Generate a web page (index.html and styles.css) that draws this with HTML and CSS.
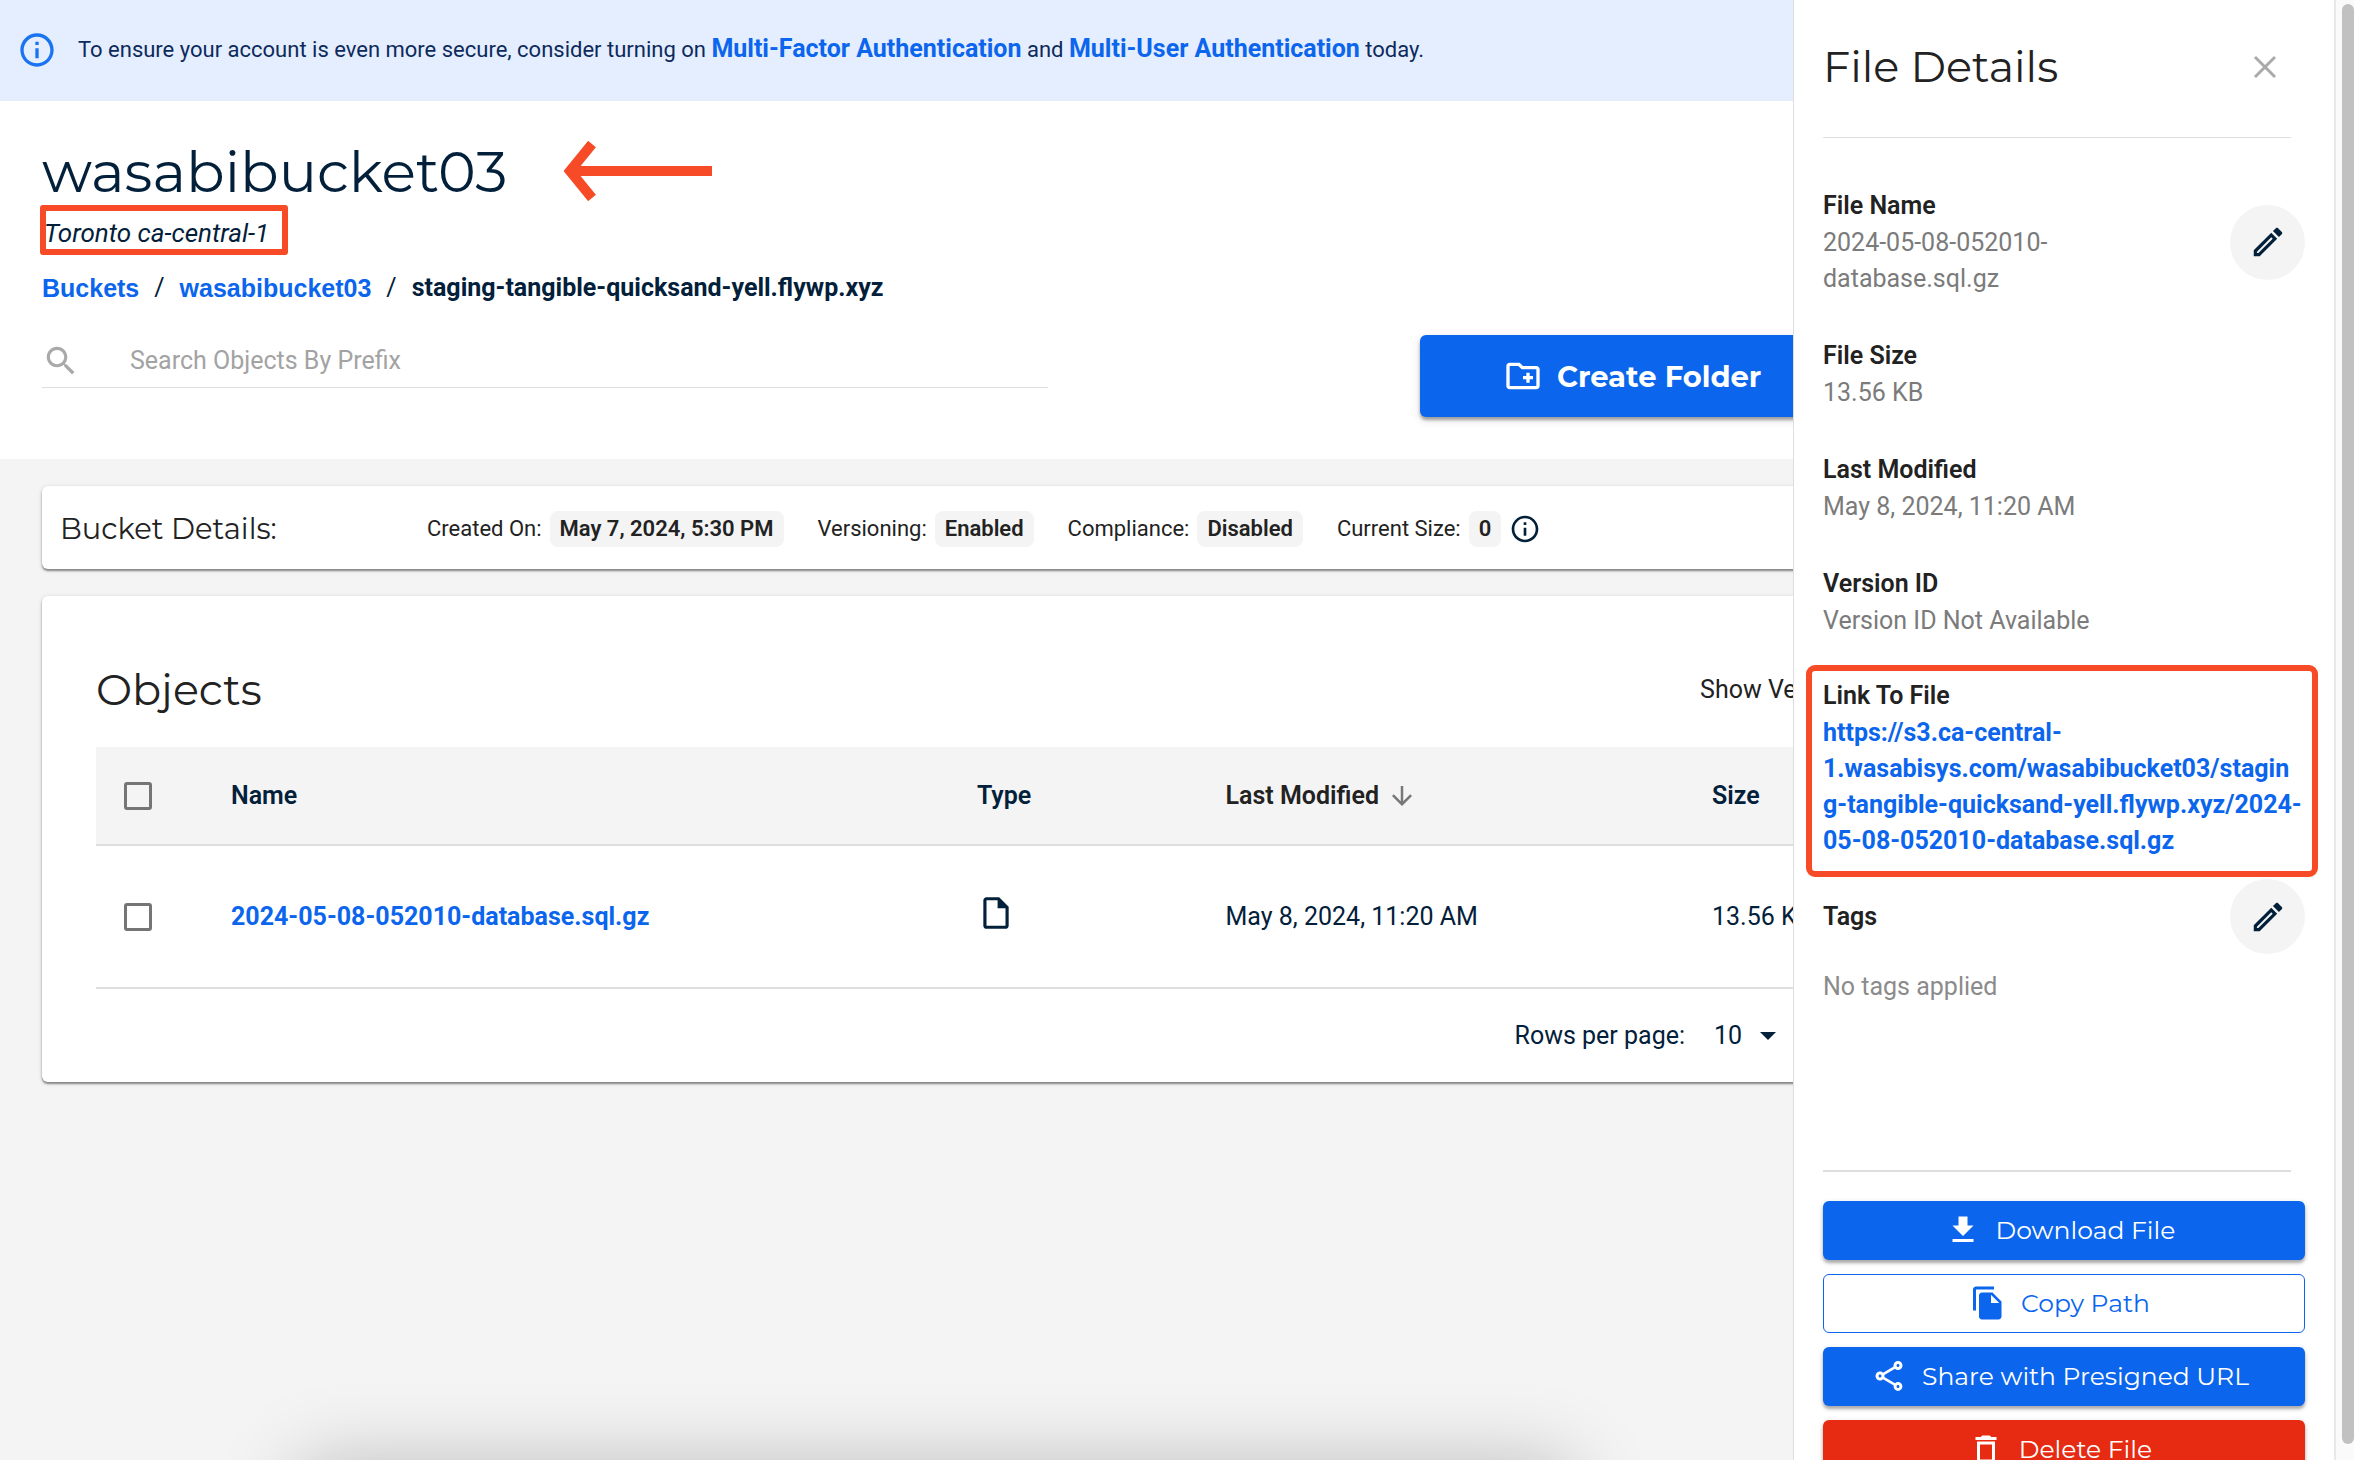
FILE: index.html
```html
<!DOCTYPE html>
<html lang="en">
<head>
<meta charset="utf-8">
<title>wasabibucket03</title>
<link rel="stylesheet" href="styles.css">
</head>
<body>
<div class="notice">
  <svg class="notice-icon" viewBox="0 0 24 24"><path d="M11 7h2v2h-2zm0 4h2v6h-2zm1-9C6.480 2 2 6.480 2 12s4.480 10 10 10 10-4.480 10-10S17.520 2 12 2zm0 18c-4.410 0-8-3.590-8-8s3.590-8 8-8 8 3.590 8 8-3.590 8-8 8z"/></svg>
  <p class="notice-text">To ensure your account is even more secure, consider turning on <a href="#">Multi-Factor Authentication</a> and <a href="#">Multi-User Authentication</a> today.</p>
</div>

<header class="head">
  <div class="title-row">
    <h1 class="title">wasabibucket03</h1>
    <svg class="title-arrow" viewBox="0 0 150 60"><path d="M7 30H149" stroke-width="10"/><path d="M29 3L7 30L29 57" stroke-width="10"/></svg>
  </div>
  <p class="region">Toronto ca-central-1</p>
  <nav class="crumbs">
    <a href="#">Buckets</a><span>/</span><a href="#">wasabibucket03</a><span>/</span><strong>staging-tangible-quicksand-yell.flywp.xyz</strong>
  </nav>
  <div class="toolbar">
    <label class="search">
      <svg class="search-icon" viewBox="0 0 24 24"><path d="M15.500 14h-.79l-.28-.27C15.410 12.590 16 11.110 16 9.500 16 5.910 13.090 3 9.500 3S3 5.910 3 9.500 5.910 16 9.500 16c1.610 0 3.090-.59 4.230-1.570l.27.28v.79l5 4.990L20.490 19l-4.990-5zm-6 0C7.010 14 5 11.990 5 9.500S7.010 5 9.500 5 14 7.010 14 9.500 11.990 14 9.500 14z"/></svg>
      <input type="text" placeholder="Search Objects By Prefix" aria-label="Search Objects By Prefix">
    </label>
    <button class="create" type="button">
      <svg class="create-icon" viewBox="0 0 24 24"><path d="M20 6h-8l-2-2H4c-1.110 0-1.990.89-1.990 2L2 18c0 1.110.89 2 2 2h16c1.110 0 2-.89 2-2V8c0-1.110-.89-2-2-2zm0 12H4V6h5.170l2 2H20v10zm-8-4h2v2h2v-2h2v-2h-2v-2h-2v2h-2z"/></svg>
      Create Folder
    </button>
  </div>
</header>

<main class="content">
  <section class="card details">
    <h2 class="details-title">Bucket Details:</h2>
    <dl class="facts">
      <div><dt>Created On:</dt><dd>May 7, 2024, 5:30 PM</dd></div>
      <div><dt>Versioning:</dt><dd>Enabled</dd></div>
      <div><dt>Compliance:</dt><dd>Disabled</dd></div>
      <div><dt>Current Size:</dt><dd>0</dd>
        <svg class="info-icon" viewBox="0 0 24 24"><path d="M11 7h2v2h-2zm0 4h2v6h-2zm1-9C6.480 2 2 6.480 2 12s4.480 10 10 10 10-4.480 10-10S17.520 2 12 2zm0 18c-4.410 0-8-3.590-8-8s3.590-8 8-8 8 3.590 8 8-3.590 8-8 8z"/></svg>
      </div>
    </dl>
  </section>

  <section class="card objects">
    <div class="objects-head">
      <h2 class="objects-title">Objects</h2>
      <span class="versions">Show Versions</span>
    </div>
    <table class="table">
      <colgroup><col class="c-check"><col class="c-name"><col class="c-type"><col class="c-date"><col></colgroup>
      <thead>
        <tr>
          <th><input type="checkbox" aria-label="Select all"></th>
          <th>Name</th>
          <th>Type</th>
          <th class="sorted">Last Modified <svg class="sort-icon" viewBox="0 0 24 24"><path d="M20 12l-1.410-1.410L13 16.170V4h-2v12.170l-5.580-5.590L4 12l8 8 8-8z"/></svg></th>
          <th>Size</th>
        </tr>
      </thead>
      <tbody>
        <tr>
          <td><input type="checkbox" aria-label="Select file"></td>
          <td><a href="#">2024-05-08-052010-database.sql.gz</a></td>
          <td><svg class="file-icon" viewBox="0 0 24 24"><path d="M6 2c-1.100 0-1.990.9-1.990 2L4 20c0 1.100.89 2 1.990 2H18c1.100 0 2-.9 2-2V8l-6-6H6zm0 18V4h7v5h5v11H6z"/></svg></td>
          <td>May 8, 2024, 11:20 AM</td>
          <td>13.56 KB</td>
        </tr>
      </tbody>
    </table>
    <div class="pager">
      <label for="rows">Rows per page:</label>
      <span class="select">
        <select id="rows"><option>10</option></select>
        <svg viewBox="0 0 16 8"><path d="M0 0h16l-8 8z"/></svg>
      </span>
    </div>
  </section>
</main>

<div class="dock-shadow"></div>

<aside class="drawer">
  <div class="drawer-head">
    <h2 class="drawer-title">File Details</h2>
    <button class="close" type="button" aria-label="Close"><svg viewBox="0 0 24 24"><path d="M2 2L22 22M22 2L2 22"/></svg></button>
  </div>
  <div class="drawer-body">
    <div class="field with-edit">
      <div class="field-text">
        <h3>File Name</h3>
        <p>2024-05-08-052010-<br>database.sql.gz</p>
      </div>
      <button class="edit" type="button" aria-label="Edit name"><svg viewBox="0 0 24 24"><path d="M14.060 9.020l.92.92L5.920 19H5v-.92l9.060-9.060M17.660 3c-.25 0-.51.1-.7.290l-1.830 1.830 3.750 3.750 1.830-1.830c.39-.39.39-1.020 0-1.410l-2.340-2.340c-.2-.2-.45-.29-.71-.29zm-3.600 3.190L3 17.250V21h3.750L17.810 9.940l-3.750-3.750z"/></svg></button>
    </div>
    <div class="field"><h3>File Size</h3><p>13.56 KB</p></div>
    <div class="field"><h3>Last Modified</h3><p>May 8, 2024, 11:20 AM</p></div>
    <div class="field"><h3>Version ID</h3><p>Version ID Not Available</p></div>
    <div class="field marked"><h3>Link To File</h3><a href="#">https://s3.ca-central-<br>1.wasabisys.com/wasabibucket03/stagin<br>g-tangible-quicksand-yell.flywp.xyz/2024-<br>05-08-052010-database.sql.gz</a></div>
    <div class="tags">
      <h3>Tags</h3>
      <button class="edit" type="button" aria-label="Edit tags"><svg viewBox="0 0 24 24"><path d="M14.060 9.020l.92.92L5.920 19H5v-.92l9.060-9.060M17.660 3c-.25 0-.51.1-.7.290l-1.830 1.830 3.750 3.750 1.830-1.830c.39-.39.39-1.020 0-1.410l-2.340-2.340c-.2-.2-.45-.29-.71-.29zm-3.600 3.190L3 17.250V21h3.750L17.810 9.940l-3.750-3.750z"/></svg></button>
    </div>
    <p class="no-tags">No tags applied</p>
  </div>
  <div class="actions">
    <button class="action" type="button"><svg viewBox="0 0 24 24"><path d="M19 9h-4V3H9v6H5l7 7 7-7zM5 18v2h14v-2H5z"/></svg>Download File</button>
    <button class="action outline" type="button"><svg viewBox="0 0 24 24"><path d="M16 1H4c-1.100 0-2 .9-2 2v14h2V3h12V1zm-1 4l6 6v10c0 1.100-.9 2-2 2H7.990C6.890 23 6 22.100 6 21l.01-14c0-1.100.89-2 1.990-2h7zm-1 7h5.500L14 6.500V12z"/></svg>Copy Path</button>
    <button class="action" type="button"><svg viewBox="0 0 24 24"><path d="M18 16.080c-.76 0-1.440.3-1.960.770L8.910 12.700c.05-.23.09-.46.09-.7s-.04-.47-.09-.7l7.050-4.110c.54.5 1.250.810 2.040.810 1.660 0 3-1.340 3-3s-1.340-3-3-3-3 1.340-3 3c0 .24.040.47.090.7L8.040 9.810C7.500 9.310 6.790 9 6 9c-1.660 0-3 1.340-3 3s1.340 3 3 3c.79 0 1.500-.31 2.040-.81l7.120 4.160c-.05.21-.08.43-.08.650 0 1.610 1.310 2.920 2.920 2.920s2.920-1.310 2.920-2.920-1.310-2.920-2.920-2.920zM18 4c.55 0 1 .45 1 1s-.45 1-1 1-1-.45-1-1 .45-1 1-1zM6 13c-.55 0-1-.45-1-1s.45-1 1-1 1 .45 1 1-.45 1-1 1zm12 7.020c-.55 0-1-.45-1-1s.45-1 1-1 1 .45 1 1-.45 1-1 1z"/></svg>Share with Presigned URL</button>
    <button class="action danger" type="button"><svg viewBox="0 0 24 24"><path d="M6 19c0 1.100.9 2 2 2h8c1.100 0 2-.9 2-2V7H6v12zM8 9h8v10H8V9zm7.500-5l-1-1h-5l-1 1H5v2h14V4z"/></svg>Delete File</button>
  </div>
</aside>
<div class="scroll-track"><div class="scroll-thumb"></div></div>
</body>
</html>
```

FILE: styles.css
```css
* { box-sizing: border-box; }
:root {
  --blue: #0b65ed;
  --navy: #03203a;
  --ink: #222;
  --red: #f64b26;
  --line: #dedede;
  --display: "Montserrat", "Inter", sans-serif;
}
body {
  margin: 0;
  height: 100vh;
  overflow: hidden;
  background: #f4f4f4;
  color: var(--navy);
  font: 25px/36px "Roboto", sans-serif;
}
h1, h2, h3, p, dl, dd { margin: 0; }
a { color: var(--blue); font-weight: 700; text-decoration: none; }
button { font-family: var(--display); border: 0; padding: 0; }
svg { fill: currentColor; flex: none; display: block; }

.notice {
  display: flex;
  align-items: center;
  gap: 21px;
  padding: 0 17px 2px;
  height: 101px;
  background: #e5eefe;
  color: #0c2a5c;
}
.notice-icon { width: 40px; height: 40px; color: #1a73f0; }
.notice-text { font-size: 22px; }
.notice-text a { font-size: 25px; font-weight: 700; }

.head { background: #fff; padding: 34px 42px 42px; height: 358px; }
.title-row { display: flex; align-items: center; gap: 56px; height: 72px; }
.title { padding-top: 2px; font: 400 57px/72px var(--display); }
.title-arrow { width: 150px; height: 60px; fill: none; stroke: var(--red); }
.region {
  width: 248px;
  margin: -2px 0 0 -2px;
  padding: 4px 0 0;
  height: 50px;
  border: 6px solid var(--red);
  border-radius: 3px;
  font-size: 26px;
  font-style: italic;
  text-indent: -2px;
}
.crumbs { display: flex; gap: 15px; margin-top: 15px; }
.crumbs a { font-family: "Liberation Sans", sans-serif; }
.crumbs strong { font-weight: 700; }
.toolbar { display: grid; grid-template-columns: 1006fr 372fr 892fr; align-items: start; margin-top: 29px; }
.search {
  grid-column: 1;
  display: flex;
  align-items: center;
  gap: 50px;
  height: 53px;
  border-bottom: 1px solid var(--line);
}
.search-icon { width: 38px; height: 38px; color: #a9a9a9; }
.search input { flex: 1; border: 0; outline: 0; padding: 0; background: none; font: inherit; }
.search input::placeholder { color: #a3a3a3; }
.create {
  grid-column: 3;
  justify-self: start;
  display: flex;
  align-items: center;
  gap: 14px;
  height: 82px;
  padding: 0 86px 0 83px;
  border-radius: 6px;
  background: var(--blue);
  color: #fff;
  font-size: 29px;
  font-weight: 700;
  box-shadow: 0 3px 3px rgba(0,0,0,.3), 0 3px 10px rgba(0,0,0,.15);
}
.create-icon { width: 40px; height: 40px; }

.content { padding: 27px 42px; display: grid; gap: 27px; }
.card { background: #fff; border-radius: 6px; box-shadow: 0 2px 2px rgba(0,0,0,.4), 0 1px 5px rgba(0,0,0,.14); }
.details { display: flex; align-items: center; height: 83px; padding: 2px 0 0 18px; color: var(--ink); }
.details-title { flex: 0 0 367px; font: 400 29px/36px var(--display); }
.facts { display: flex; gap: 34px; font-size: 22px; }
.facts div { display: flex; align-items: center; gap: 8px; }
.facts dd { padding: 0 10px; border-radius: 8px; background: #f4f4f4; font-weight: 600; }
.info-icon { width: 32px; height: 32px; color: var(--navy); }

.objects { padding: 60px 54px 0; }
.objects-head { display: flex; justify-content: space-between; align-items: center; height: 68px; padding-right: 393px; color: var(--ink); }
.objects-title { font: 400 43px/48px var(--display); }
.table { width: 100%; table-layout: fixed; border-collapse: collapse; margin-top: 23px; }
.c-check { width: 135px; }
.c-name { width: 34.5%; }
.c-type { width: 11.5%; }
.c-date { width: 22.5%; }
.table th, .table td { padding: 0; text-align: left; border-bottom: 2px solid var(--line); white-space: nowrap; }
.table th { height: 98px; background: #f4f4f4; font-weight: 600; }
.table td { height: 143px; }
.table a { font-weight: 700; }
.table .sorted { color: var(--ink); }
.table input {
  appearance: none;
  display: block;
  width: 28px;
  height: 28px;
  margin: 0 0 0 28px;
  border: 3px solid #757575;
  border-radius: 3px;
}
.sort-icon { display: inline-block; width: 30px; height: 30px; margin-left: 2px; vertical-align: -7px; color: #777; }
.file-icon { width: 38px; height: 38px; margin-bottom: 8px; }
.pager { display: flex; align-items: center; justify-content: flex-end; gap: 29px; height: 93px; padding-right: 482px; }
.select { display: flex; align-items: center; gap: 17px; }
.select select { appearance: none; border: 0; padding: 0; background: none; color: inherit; font: inherit; }
.select svg { width: 16px; height: 8px; }

.dock-shadow {
  position: fixed;
  left: 300px;
  right: 784px;
  top: 100%;
  height: 120px;
  box-shadow: 0 6px 80px rgba(0,0,0,.25);
}

.drawer {
  position: fixed;
  top: 0;
  right: 18px;
  width: 543px;
  height: 100%;
  padding: 0 29px;
  overflow: hidden;
  background: #fff;
  border-left: 1px solid var(--line);
  border-right: 2px solid #e8e8e8;
  color: var(--ink);
}
.drawer-head {
  display: flex;
  align-items: center;
  justify-content: space-between;
  height: 138px;
  margin-right: 14px;
  padding: 0 14px 4px 0;
  border-bottom: 1px solid var(--line);
}
.drawer-title { font: 400 43px/48px var(--display); }
.close { width: 24px; height: 24px; background: none; color: #aaa; }
.close svg { stroke: currentColor; stroke-width: 3; }
.drawer-body { height: 1034px; margin-right: 14px; padding-top: 49px; border-bottom: 2px solid var(--line); }
.drawer h3 { font-size: 25px; line-height: 38px; font-weight: 600; }
.field { margin-bottom: 40px; }
.field p { color: #7b7b7b; }
.with-edit { display: flex; align-items: center; justify-content: space-between; }
.edit {
  display: grid;
  place-items: center;
  width: 75px;
  height: 75px;
  margin-right: -14px;
  border-radius: 50%;
  background: #f4f4f4;
  color: var(--navy);
}
.edit svg { width: 38px; height: 38px; }
.marked { width: 512px; height: 212px; margin: -14px 0 2px -17px; padding: 6px 0 0 11px; border: 6px solid var(--red); border-radius: 9px; white-space: nowrap; }
.marked a { display: block; font-weight: 700; }
.tags { display: flex; align-items: center; justify-content: space-between; }
.no-tags { margin-top: 15px; color: #8b8b8b; }
.actions { display: grid; gap: 14px; padding-top: 29px; }
.action {
  display: flex;
  align-items: center;
  justify-content: center;
  gap: 15px;
  height: 59px;
  padding: 0 8px 1px 0;
  border-radius: 6px;
  background: var(--blue);
  color: #fff;
  font-size: 25px;
  box-shadow: 0 3px 3px rgba(0,0,0,.25), 0 2px 6px rgba(0,0,0,.15);
}
.action svg { width: 36px; height: 36px; }
.outline { border: 1px solid var(--blue); background: #fff; color: var(--blue); box-shadow: none; }
.danger { background: #e62b12; }

.scroll-track { position: fixed; top: 0; right: 0; width: 18px; height: 100%; padding: 4px 0 16px 6px; background: #fafafa; }
.scroll-thumb { height: 100%; border-radius: 8px; background: #c1c1c1; }
```
